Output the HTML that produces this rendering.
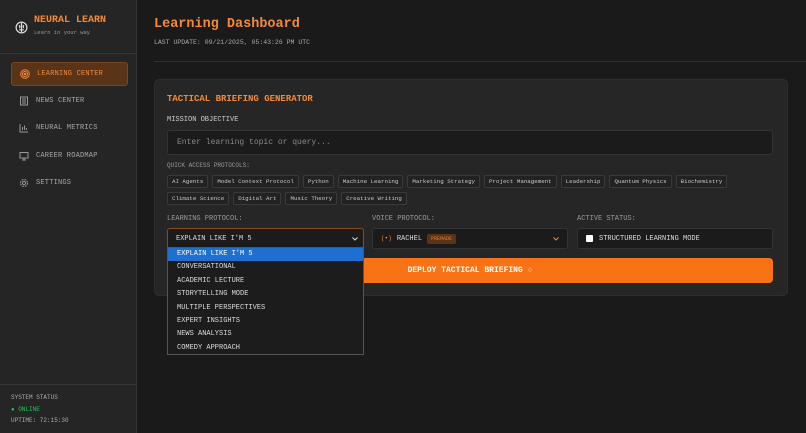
<!DOCTYPE html>
<html><head><meta charset="utf-8"><style>
*{box-sizing:border-box;margin:0;padding:0}
body{width:806px;height:433px;background:#1a1a1a;font-family:"Liberation Mono",monospace;color:#ccc;position:relative;overflow:hidden}
.side{position:absolute;left:0;top:0;width:137px;height:433px;background:#252525;border-right:1px solid #333}
.abs{position:absolute;white-space:nowrap}
.or{color:#f28a3a}
.nav{position:absolute;left:11px;width:117px;height:24px;display:flex;align-items:center;padding-left:8px;font-size:7px;color:#a8a8a8;letter-spacing:.2px}
.nav svg{margin-right:7px}
.card{position:absolute;left:154px;top:79px;width:634px;height:217px;background:#262626;border-radius:5px;border:1px solid #2e2e2e}
.lbl{font-size:7px;color:#ccc}
.row{display:flex;gap:4px}
.chip{font-size:5.8px;color:#c8c8c8;border:1px solid #3a3a3a;background:#222;padding:0 4px;height:13px;line-height:12px;border-radius:2px;white-space:nowrap}
.box{position:absolute;top:228px;height:21px;background:#1b1b1b;border:1px solid #333;border-radius:3px;font-size:7px;display:flex;align-items:center;padding-left:8px;color:#ddd}
.dd{position:absolute;left:167px;top:247px;width:197px;height:108px;background:#1c1c1c;border:1px solid #555}
.dd div{height:13.4px;line-height:13.4px;font-size:7px;padding-left:9px;color:#ddd}
</style></head><body>
<div class="side">
  <svg class="abs" style="left:15px;top:21px" width="13" height="13" viewBox="0 0 14 14" fill="none" stroke="#ddd" stroke-width="1.3"><circle cx="7" cy="7" r="5.8"/><path d="M7 2v10M4.5 4.5c1 1 1 2 0 3M9.5 4.5c-1 1-1 2 0 3M4.5 9.5h2M7.5 9.5h2"/></svg>
  <div class="abs or" style="left:34px;top:15px;font-size:10px;font-weight:bold">NEURAL LEARN</div>
  <div class="abs" style="left:34px;top:29px;font-size:5.5px;color:#999">Learn in your way</div>
  <div class="abs" style="left:0;top:53px;width:137px;border-top:1px solid #353535"></div>
  <div class="nav" style="top:62px;background:#5a3418;border:1px solid #7a4520;border-radius:3px;color:#f28a3a">
    <svg width="10" height="10" viewBox="0 0 10 10" fill="none" stroke="#f28a3a" stroke-width="1"><circle cx="5" cy="5" r="4.3"/><circle cx="5" cy="5" r="2.5"/><circle cx="5" cy="5" r=".8"/></svg>LEARNING CENTER</div>
  <div class="nav" style="top:89px"><svg width="10" height="10" viewBox="0 0 10 10" fill="none" stroke="#999"><rect x="1.5" y="1" width="7" height="8"/><path d="M3 3h4M3 5h4M3 7h4"/></svg>NEWS CENTER</div>
  <div class="nav" style="top:116px"><svg width="10" height="10" viewBox="0 0 10 10" fill="none" stroke="#999"><path d="M1 1v8h8M3.5 7V4M5.5 7V2.5M7.5 7V5"/></svg>NEURAL METRICS</div>
  <div class="nav" style="top:144px"><svg width="10" height="10" viewBox="0 0 10 10" fill="none" stroke="#999"><rect x="1" y="1.5" width="8" height="5.5"/><path d="M5 7v2M3 9h4"/></svg>CAREER ROADMAP</div>
  <div class="nav" style="top:171px"><svg width="10" height="10" viewBox="0 0 10 10" fill="none" stroke="#999"><circle cx="5" cy="5" r="1.6"/><circle cx="5" cy="5" r="3.5" stroke-dasharray="1.8 1"/></svg>SETTINGS</div>
  <div class="abs" style="left:0;top:384px;width:137px;border-top:1px solid #353535"></div>
  <div class="abs" style="left:11px;top:394px;font-size:6px;color:#aaa">SYSTEM STATUS</div>
  <div class="abs" style="left:11px;top:406px;font-size:6px;color:#22c55e">● ONLINE</div>
  <div class="abs" style="left:11px;top:417px;font-size:6px;color:#aaa">UPTIME: 72:15:30</div>
</div>
<div class="abs or" style="left:154px;top:17px;font-size:13.5px;font-weight:bold">Learning Dashboard</div>
<div class="abs" style="left:154px;top:39px;font-size:6.5px;color:#aaa">LAST UPDATE: 09/21/2025, 05:43:26 PM UTC</div>
<div class="abs" style="left:154px;top:61px;width:652px;border-top:1px solid #2f2f2f"></div>
<div class="card"></div>
<div class="abs or" style="left:167px;top:94px;font-size:9px;font-weight:bold">TACTICAL BRIEFING GENERATOR</div>
<div class="abs lbl" style="left:167px;top:116px">MISSION OBJECTIVE</div>
<div class="abs" style="left:167px;top:130px;width:606px;height:25px;background:#1b1b1b;border:1px solid #333;border-radius:3px;font-size:8px;color:#888;padding:7px 0 0 9px">Enter learning topic or query...</div>
<div class="abs" style="left:167px;top:162px;font-size:6px;color:#999">QUICK ACCESS PROTOCOLS:</div>
<div class="abs row" style="left:167px;top:175px"><span class="chip">AI Agents</span><span class="chip">Model Context Protocol</span><span class="chip">Python</span><span class="chip">Machine Learning</span><span class="chip">Marketing Strategy</span><span class="chip">Project Management</span><span class="chip">Leadership</span><span class="chip">Quantum Physics</span><span class="chip">Biochemistry</span></div>
<div class="abs row" style="left:167px;top:192px"><span class="chip">Climate Science</span><span class="chip">Digital Art</span><span class="chip">Music Theory</span><span class="chip">Creative Writing</span></div>
<div class="abs lbl" style="left:167px;top:215px;color:#999">LEARNING PROTOCOL:</div>
<div class="abs lbl" style="left:372px;top:215px;color:#999">VOICE PROTOCOL:</div>
<div class="abs lbl" style="left:577px;top:215px;color:#999">ACTIVE STATUS:</div>
<div class="box" style="left:167px;width:197px;border-color:#8a4a1c">EXPLAIN LIKE I'M 5<svg style="position:absolute;right:5px;top:8px" width="6" height="4" viewBox="0 0 6 4" fill="none" stroke="#ddd"><path d="M.5 .5L3 3 5.5 .5"/></svg></div>
<div class="box" style="left:372px;width:196px"><span class="or" style="margin-right:5px;font-size:6px">(•)</span>RACHEL<span style="background:#5a3418;color:#e07a30;font-size:5px;padding:2px 4px;margin-left:5px;border-radius:2px">PREMADE</span><svg style="position:absolute;right:8px;top:8px" width="6" height="4" viewBox="0 0 6 4" fill="none" stroke="#f28a3a"><path d="M.5 .5L3 3 5.5 .5"/></svg></div>
<div class="box" style="left:577px;width:196px"><span style="width:7px;height:7px;background:#fff;border-radius:1px;margin-right:6px;display:inline-block"></span>STRUCTURED LEARNING MODE</div>
<div class="abs" style="left:167px;top:258px;width:606px;height:25px;background:#f97316;border-radius:4px;color:#fff;font-size:8px;font-weight:bold;text-align:center;line-height:25px">DEPLOY TACTICAL BRIEFING <span style="color:#fbb072">◇</span></div>
<div class="dd">
<div style="background:#1e6fd0;color:#fff">EXPLAIN LIKE I'M 5</div>
<div>CONVERSATIONAL</div><div>ACADEMIC LECTURE</div><div>STORYTELLING MODE</div><div>MULTIPLE PERSPECTIVES</div><div>EXPERT INSIGHTS</div><div>NEWS ANALYSIS</div><div>COMEDY APPROACH</div>
</div>
</body></html>
